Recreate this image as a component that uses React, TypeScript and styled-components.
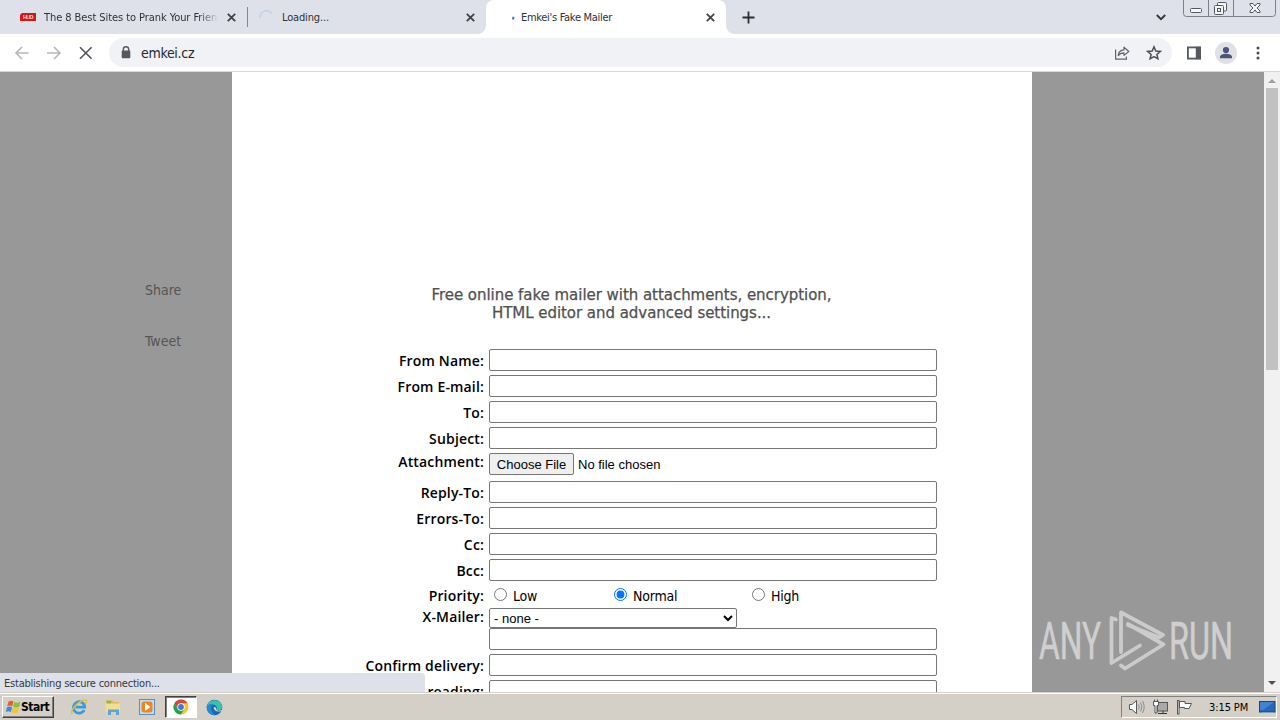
import styled, { createGlobalStyle } from 'styled-components';

const textRows = ['From Name:', 'From E-mail:', 'To:', 'Subject:'];
const replyRows = ['Reply-To:', 'Errors-To:', 'Cc:', 'Bcc:'];

export default function App() {
  return (
    <Screen>
      <GlobalStyle />
      <TabStrip>
        <Tab $width={247}>
          <HudIcon />
          <TabTitle $fade $spacing={-0.07}>
            The 8 Best Sites to Prank Your Friends
          </TabTitle>
          <CloseIcon />
        </Tab>
        <Divider />
        <Tab $width={238}>
          <SpinnerIcon />
          <TabTitle $spacing={-0.15}>Loading...</TabTitle>
          <CloseIcon />
        </Tab>
        <ActiveTab $width={240}>
          <LoadingDot />
          <TabTitle $spacing={-0.3}>Emkei's Fake Mailer</TabTitle>
          <CloseIcon />
        </ActiveTab>
        <NewTab>
          <svg width="13" height="13" viewBox="0 0 13 13" stroke="#2b2d31" strokeWidth="1.8">
            <path d="M6.5 0.5V12.5M0.5 6.5H12.5" />
          </svg>
        </NewTab>
        <TabSearch>
          <svg width="10" height="7" viewBox="0 0 10 7" fill="none" stroke="#333539" strokeWidth="1.8">
            <path d="M0.8 1L5 5.2L9.2 1" />
          </svg>
        </TabSearch>
        <WindowButtons />
      </TabStrip>

      <Toolbar>
        <NavButtons />
        <AddressBar>
          <svg width="10" height="13" viewBox="0 0 10 13">
            <path d="M2.3 5V3.4a2.7 2.7 0 0 1 5.4 0V5" fill="none" stroke="#55585d" strokeWidth="1.4" />
            <rect x="0.7" y="4.6" width="8.6" height="7.6" rx="1" fill="#55585d" />
          </svg>
          <Url>emkei.cz</Url>
          <ShareIcon />
          <StarIcon />
        </AddressBar>
        <SidePanelIcon />
        <Avatar>
          <svg width="14" height="14" viewBox="0 0 14 14" fill="#4b5675">
            <circle cx="7" cy="4" r="3.1" />
            <path d="M1 12.2V11c0-2.1 3.4-3.2 6-3.2s6 1.1 6 3.2v1.2z" />
          </svg>
        </Avatar>
        <svg width="4" height="14" viewBox="0 0 4 14" fill="#4a4c50">
          <circle cx="2" cy="2" r="1.5" />
          <circle cx="2" cy="7" r="1.5" />
          <circle cx="2" cy="12" r="1.5" />
        </svg>
      </Toolbar>

      <Viewport>
        <SideColumn>
          <span>Share</span>
          <span>Tweet</span>
        </SideColumn>
        <Page>
          <Tagline>
            Free online fake mailer with attachments, encryption,
            <br />
            HTML editor and advanced settings...
          </Tagline>
          <Form>
            {textRows.map((label) => (
              <Row key={label} $height={26}>
                <Label>{label}</Label>
                <TextInput />
              </Row>
            ))}
            <Row $height={28}>
              <Label $lift={7}>Attachment:</Label>
              <FileField>
                <FileButton type="button">Choose File</FileButton>
                <span>No file chosen</span>
              </FileField>
            </Row>
            {replyRows.map((label) => (
              <Row key={label} $height={26}>
                <Label>{label}</Label>
                <TextInput />
              </Row>
            ))}
            <Row $height={23}>
              <Label>Priority:</Label>
              <PriorityGroup>
                <Choice>
                  <input type="radio" name="priority" />
                  <span>Low</span>
                </Choice>
                <Choice>
                  <input type="radio" name="priority" defaultChecked />
                  <span>Normal</span>
                </Choice>
                <Choice>
                  <input type="radio" name="priority" />
                  <span>High</span>
                </Choice>
              </PriorityGroup>
            </Row>
            <Row $height={22}>
              <Label $lift={1}>X-Mailer:</Label>
              <MailerSelect>
                <option>- none -</option>
              </MailerSelect>
            </Row>
            <Row $height={24}>
              <Label />
              <TextInput $tight />
            </Row>
            <Row $height={26}>
              <Label>Confirm delivery:</Label>
              <TextInput />
            </Row>
            <Row $height={26}>
              <Label>Confirm reading:</Label>
              <TextInput />
            </Row>
          </Form>
        </Page>
        <Scrollbar>
          <Arrow $up />
          <Thumb />
          <Arrow />
        </Scrollbar>
        <StatusBubble>Establishing secure connection...</StatusBubble>
        <Watermark />
      </Viewport>

      <Taskbar>
        <StartButton type="button">
          <WindowsFlag />
          <span>Start</span>
        </StartButton>
        <QuickLaunch>
          <ExplorerIcon />
          <FolderIcon />
          <MediaIcon />
          <PressedTask>
            <ChromeIcon />
          </PressedTask>
          <EdgeIcon />
        </QuickLaunch>
        <Tray>
          <SpeakerIcon />
          <NetworkIcon />
          <FlagIcon />
          <Clock>3:15 PM</Clock>
          <DesktopIcon />
        </Tray>
      </Taskbar>
    </Screen>
  );
}

function CloseIcon() {
  return (
    <svg width="9" height="9" viewBox="0 0 9 9" stroke="#3f4247" strokeWidth="1.8">
      <path d="M0.8 0.8L8.2 8.2M8.2 0.8L0.8 8.2" />
    </svg>
  );
}

function HudIcon() {
  return (
    <svg width="16" height="16" viewBox="0 0 16 16">
      <path d="M2 4h14v8H0V6z" fill="#d3151c" />
      <text x="3" y="10" fontSize="5.500" fontWeight="700" fill="#ffd9d9" fontFamily="Liberation Sans, sans-serif" textLength="10.500">
        HUD
      </text>
    </svg>
  );
}

function SpinnerIcon() {
  return (
    <svg width="16" height="16" viewBox="0 0 16 16" fill="none" stroke="#bfd3ea" strokeWidth="1.600">
      <path d="M2.200 9A6.300 6.300 0 0 1 13.800 4.800" />
    </svg>
  );
}

function LoadingDot() {
  return (
    <svg width="16" height="16" viewBox="0 0 16 16" fill="none" stroke="#2f78cf" strokeWidth="2">
      <path d="M13.900 10.400L14.600 7.800" />
    </svg>
  );
}

function WindowButtons() {
  return (
    <svg width="93" height="17" viewBox="0 0 93 17" fill="none" stroke="#7b7f88">
      <path d="M0.5 0V13.500a3 3 0 0 0 3 3H89.500a3 3 0 0 0 3-3V0M25.500 0V16M50.500 0V16" />
      <g stroke="#55585f" fill="#f5f6f8">
        <rect x="7.500" y="8.500" width="11" height="4" rx="1" />
        <rect x="34.500" y="2.500" width="9" height="8.500" rx="1" />
        <rect x="31.500" y="5.500" width="9" height="9" rx="1" />
        <rect x="34.500" y="8.500" width="3" height="3" />
        <path d="M67 3.500h3l2 2.600 2-2.600h3v1.500l-3 3 3 3v1.500h-3l-2-2.600-2 2.600h-3V11l3-3-3-3z" />
      </g>
    </svg>
  );
}

function NavButtons() {
  return (
    <svg width="80" height="16" viewBox="0 0 80 16" fill="none" strokeWidth="1.600">
      <path d="M14.500 8H2M8 2L2 8L8 14" stroke="#b5b7ba" />
      <path d="M33 8H46M40 2L46 8L40 14" stroke="#b5b7ba" />
      <path d="M66 2.200L77.600 13.800M77.600 2.200L66 13.800" stroke="#505358" />
    </svg>
  );
}

function ShareIcon() {
  return (
    <svg width="16" height="16" viewBox="0 0 16 16" fill="none" stroke="#5f6368" strokeWidth="1.200" strokeLinejoin="round">
      <path d="M1.600 4.500V14.200H12.400V11.500" />
      <path d="M4.200 10.600C4.500 7.200 6.600 5.100 10 4.800V2.200L14.800 6.500L10 10.400V7.800C7.400 7.800 5.500 8.700 4.200 10.600z" />
    </svg>
  );
}

function StarIcon() {
  return (
    <svg width="16" height="16" viewBox="0 0 16 16" fill="none" stroke="#4c4f54" strokeWidth="1.500">
      <path d="M8 1.800L9.800 6L14.300 6.400L10.900 9.400L11.900 13.800L8 11.500L4.100 13.800L5.100 9.400L1.700 6.400L6.200 6z" />
    </svg>
  );
}

function SidePanelIcon() {
  return (
    <svg width="14" height="14" viewBox="0 0 14 14">
      <rect x="0.900" y="1.400" width="12.200" height="11.200" fill="#fff" stroke="#55585d" strokeWidth="1.800" />
      <rect x="8.800" y="0.800" width="5" height="12.400" fill="#55585d" />
    </svg>
  );
}

function Watermark() {
  return (
    <WatermarkSvg width="200" height="64" viewBox="0 0 200 64">
      <g fill="#cfcfcf" stroke="#cfcfcf" strokeWidth="0.600" fontFamily="Roboto, sans-serif" fontSize="51">
        <text x="3" y="50" textLength="62" lengthAdjust="spacingAndGlyphs">
          ANY
        </text>
        <text x="133" y="50" textLength="64" lengthAdjust="spacingAndGlyphs">
          RUN
        </text>
      </g>
      <g fill="none" stroke="#cbcbcb" strokeWidth="3.800" strokeLinejoin="round" strokeLinecap="round">
        <path d="M80 10.500L75.500 9V54L104 36.500" />
        <path d="M85 43V3.500L127 26L123 28.500L92 16" />
        <path d="M85 56.500L89 59.500L127.500 35.500L92 15" />
      </g>
    </WatermarkSvg>
  );
}

function WindowsFlag() {
  return (
    <svg width="17" height="16" viewBox="0 0 17 16">
      <path d="M3.500 2.500C5.500 1.300 7 1.500 8.500 2.500L7.300 7.300C5.800 6.300 4.200 6.300 2.300 7.200z" fill="#e4602d" />
      <path d="M9.300 2.900C11.200 4 13 4 15.500 2.800L14.200 7.700C12.200 8.800 10 8.700 8.100 7.600z" fill="#8abf3f" />
      <path d="M2 8.200C4 7.200 5.600 7.400 7.100 8.300L5.900 13.100C4.300 12.100 2.700 12 0.800 12.900z" fill="#3c8bd9" />
      <path d="M7.900 8.700C9.800 9.700 11.800 9.800 14 8.700L12.700 13.400C10.500 14.600 8.500 14.500 6.700 13.500z" fill="#f3c433" />
    </svg>
  );
}

function ExplorerIcon() {
  return (
    <svg width="18" height="18" viewBox="0 0 18 18" fill="none">
      <path d="M14.200 12A5.700 5.700 0 1 1 14.800 9.200H5.500" stroke="#389bd8" strokeWidth="2.700" />
      <path d="M2.400 15.800C-0.500 13.500 6 5.500 12 2.700C16.800 0.600 17.200 3 15.500 5.800" stroke="#e7b93d" strokeWidth="1.500" />
    </svg>
  );
}

function FolderIcon() {
  return (
    <svg width="18" height="18" viewBox="0 0 18 18">
      <path d="M2 2h6l1 2h6v10H2z" fill="#dcb95a" />
      <path d="M3 3h4v4H3z" fill="#83b768" />
      <path d="M1.500 5.500h14.500V14h-14.500z" fill="#f2dd94" />
      <path d="M4 17v-5.500h11V17h-3v-3h-5v3z" fill="#5fa5d4" />
    </svg>
  );
}

function MediaIcon() {
  return (
    <svg width="18" height="18" viewBox="0 0 18 18">
      <rect x="1.500" y="1.500" width="15" height="15" fill="#c5ddf0" stroke="#568fc2" />
      <rect x="3.500" y="3.500" width="11" height="11" rx="2.500" fill="#ee8422" />
      <path d="M7 5L12.500 9L7 13z" fill="#fff" />
    </svg>
  );
}

function ChromeIcon() {
  return (
    <svg width="16" height="16" viewBox="0 0 16 16">
      <circle cx="8" cy="8" r="7.500" fill="#f6c62d" />
      <path d="M1.500 4.250A7.500 7.500 0 0 1 14.500 4.250H8L4.750 9.900z" fill="#db4437" />
      <path d="M1.500 4.250A7.500 7.500 0 0 0 8 15.500L11.200 9.900L8 11.750L4.750 9.900z" fill="#26a054" />
      <circle cx="8" cy="8" r="3.700" fill="#fff" />
      <circle cx="8" cy="8" r="2.900" fill="#3a78e7" />
    </svg>
  );
}

function EdgeIcon() {
  return (
    <svg width="17" height="17" viewBox="0 0 17 17">
      <circle cx="8.500" cy="8.500" r="7.800" fill="#1767b5" />
      <path d="M0.800 7.500C2 -1 15.500 -1 16.200 7.500C16.300 10.500 13.500 11.500 10.500 11C12 8.500 10 5.500 6.500 5.500C4 5.500 2 6 0.800 7.500z" fill="#39c1a9" />
      <path d="M0.700 8.500C1 5.800 4 4.300 7 5.400C4 7.500 4.500 13 9.500 16.200C4 16.600 0.500 12.500 0.700 8.500z" fill="#2189d6" />
      <path d="M7.500 8.500C8.500 7.200 10.800 8 10.300 10.500C10.700 12 14 12 16.500 10.500C15 13.600 8 13.500 7.500 8.500z" fill="#d4d8d8" />
    </svg>
  );
}

function SpeakerIcon() {
  return (
    <svg width="17" height="16" viewBox="0 0 17 16" fill="none" stroke="#55575a">
      <path d="M1.500 5.500h2.500L8.500 1.500v13L4 10.500H1.500z" fill="#fff" />
      <path d="M10.500 5.500q1.600 2.500 0 5M12.500 3.500q3 4.500 0 9M14.500 2q3.400 6 0 12" stroke="#8b8b8b" />
    </svg>
  );
}

function NetworkIcon() {
  return (
    <svg width="17" height="16" viewBox="0 0 17 16" stroke="#55575a">
      <rect x="5.500" y="3.500" width="10" height="8.500" fill="#a9aba9" />
      <path d="M6 14.500h9M11 12v2.500" stroke="#333" />
      <path d="M1.500 2.500h5v4h-1.500v7.500h-2V6.500H1.500zM2.500 0.500v2M5.500 0.500v2" fill="#fff" />
    </svg>
  );
}

function FlagIcon() {
  return (
    <svg width="17" height="16" viewBox="0 0 17 16" fill="#fff" stroke="#55575a">
      <path d="M3.500 2.500H9V4.500H15.500L13 9.500H8.500V8.500H3.500z" />
      <rect x="1.500" y="1.500" width="1.500" height="13.500" />
    </svg>
  );
}

function DesktopIcon() {
  return (
    <svg width="17" height="15" viewBox="0 0 17 15">
      <rect x="0.500" y="1.500" width="15.500" height="10.500" fill="#2767b9" stroke="#174481" />
      <path d="M1 2h14L4 10H1z" fill="#4282d2" />
      <path d="M3 13.500h11" stroke="#bfd4ea" strokeWidth="1.500" />
    </svg>
  );
}

const GlobalStyle = createGlobalStyle`
  * {
    box-sizing: border-box;
  }
  body {
    margin: 0;
    overflow: hidden;
  }
  svg {
    display: block;
    flex: none;
  }
`;

const Screen = styled.div`
  display: flex;
  flex-direction: column;
  width: 1280px;
  height: 720px;
  font-family: 'DejaVu Sans Condensed', 'DejaVu Sans', sans-serif;
  color: #000;
  overflow: hidden;
`;

const TabStrip = styled.div`
  display: flex;
  height: 34px;
  background: #dee1e9;
`;

const Tab = styled.div<{ $width: number }>`
  display: flex;
  align-items: center;
  width: ${(p) => p.$width}px;
  padding: 0 11px 0 20px;
  gap: 8px;
  font-size: 11px;

  &:nth-child(3) {
    padding-left: 10px;
  }
`;

const ActiveTab = styled(Tab)`
  position: relative;
  background: #fff;
  border-radius: 8px 8px 0 0;
  padding-left: 13px;
  gap: 6px;

  &::before,
  &::after {
    content: '';
    position: absolute;
    bottom: 0;
    width: 8px;
    height: 8px;
  }
  &::before {
    left: -8px;
    background: radial-gradient(circle at 0 0, transparent 7.5px, #fff 8px);
  }
  &::after {
    right: -8px;
    background: radial-gradient(circle at 100% 0, transparent 7.5px, #fff 8px);
  }
`;

const TabTitle = styled.span<{ $fade?: boolean; $spacing: number }>`
  flex: 1;
  min-width: 0;
  overflow: hidden;
  white-space: nowrap;
  color: #2e3135;
  letter-spacing: ${(p) => p.$spacing}px;
  ${(p) => p.$fade && 'mask-image: linear-gradient(90deg, #000 155px, transparent 175px);'}
`;

const Divider = styled.div`
  width: 1px;
  height: 20px;
  margin-top: 7px;
  background: #83868c;
`;

const NewTab = styled.div`
  padding: 11px 16px;
`;

const TabSearch = styled.div`
  margin-left: auto;
  padding: 14px 17px 0 0;

  & + svg {
    margin-right: 4px;
  }
`;

const Toolbar = styled.div`
  display: flex;
  align-items: center;
  height: 38px;
  padding: 0 20px 0 14px;
  background: #fff;
  border-bottom: 1px solid #d5d7da;

  > svg:last-child {
    margin-left: 19px;
  }
`;

const AddressBar = styled.div`
  display: flex;
  align-items: center;
  width: 1063px;
  height: 29px;
  margin: 0 15px 0 15px;
  padding: 0 10px 0 12px;
  border-radius: 15px;
  background: #f0f2f5;
  gap: 16px;
`;

const Url = styled.span`
  flex: 1;
  margin-left: -6px;
  color: #25272b;
  font-size: 14px;
  letter-spacing: -0.3px;
`;

const Avatar = styled.div`
  display: grid;
  place-items: center;
  width: 22px;
  height: 22px;
  margin-left: 14px;
  border-radius: 50%;
  background: #dfe1e6;
`;

const Viewport = styled.main`
  position: relative;
  display: flex;
  height: 620px;
  background: #989898;
  overflow: hidden;
`;

const SideColumn = styled.div`
  display: flex;
  flex-direction: column;
  width: 232px;
  padding: 209px 0 0 145px;
  gap: 33px;
  font-size: 14px;
  line-height: 18px;
  color: #555;
`;

const Page = styled.div`
  width: 800px;
  background: #fff;
`;

const Tagline = styled.p`
  margin: 214px 0 0;
  padding-right: 1px;
  font-family: 'DejaVu Sans', sans-serif;
  font-size: 15px;
  line-height: 18px;
  letter-spacing: -0.04px;
  text-align: center;
  color: #505050;
  -webkit-text-stroke: 0.25px #505050;
`;

const Form = styled.form`
  margin-top: 25px;
`;

const Row = styled.div<{ $height: number }>`
  display: grid;
  grid-template-columns: 252px 448px;
  column-gap: 5px;
  align-items: center;
  height: ${(p) => p.$height}px;
`;

const Label = styled.label<{ $lift?: number }>`
  padding: ${(p) => (p.$lift ? `0 0 ${p.$lift}px` : '2px 0 0')};
  font-family: 'Open Sans', 'Noto Sans', sans-serif;
  font-size: 14px;
  font-weight: 600;
  line-height: 18px;
  letter-spacing: 0.16px;
  text-align: right;
  white-space: nowrap;
`;

const TextInput = styled.input<{ $tight?: boolean }>`
  width: 448px;
  height: 22px;
  margin: 0;
  border: 1px solid #767676;
  border-radius: 2px;
  background: #fff;
  ${(p) => p.$tight && 'align-self: start;'}
`;

const FileField = styled.div`
  display: flex;
  align-items: center;
  gap: 4px;
  padding-bottom: 2px;
  font-family: 'Liberation Sans', Arial, sans-serif;
  font-size: 13px;
`;

const FileButton = styled.button`
  width: 85px;
  height: 22px;
  padding: 0;
  border: 1px solid #767676;
  border-radius: 2px;
  background: #efefef;
  font: inherit;
`;

const PriorityGroup = styled.div`
  display: grid;
  grid-template-columns: 120px 138px auto;
`;

const Choice = styled.label`
  display: flex;
  align-items: center;
  height: 19px;
  font-size: 14px;
  letter-spacing: -0.2px;
  line-height: 17px;

  input {
    width: 13px;
    height: 13px;
    margin: 0 6px 0 5px;
  }
  span {
    padding-top: 3px;
  }
`;

const MailerSelect = styled.select`
  align-self: end;
  width: 248px;
  height: 20px;
  padding: 0;
  border: 1px solid #767676;
  border-radius: 2px;
  background: #fff;
  font-family: 'Liberation Sans', Arial, sans-serif;
  font-size: 13px;
`;

const Scrollbar = styled.div`
  display: flex;
  flex-direction: column;
  align-items: center;
  width: 16px;
  margin-left: auto;
  background: #f1f1f1;
`;

const Arrow = styled.span<{ $up?: boolean }>`
  width: 8px;
  height: 4px;
  margin: ${(p) => (p.$up ? '7px 0 5px' : 'auto 0 7px')};
  background: ${(p) => (p.$up ? '#a0a0a0' : '#505050')};
  clip-path: ${(p) => (p.$up ? 'polygon(50% 0, 100% 100%, 0 100%)' : 'polygon(0 0, 100% 0, 50% 100%)')};
`;

const Thumb = styled.div`
  width: 12px;
  height: 282px;
  background: #c1c1c1;
`;

const StatusBubble = styled.div`
  position: absolute;
  left: 0;
  bottom: 0;
  width: 425px;
  height: 19px;
  padding-left: 4px;
  border-radius: 0 4px 0 0;
  background: #dee1e9;
  font-size: 11px;
  line-height: 21px;
  letter-spacing: -0.22px;
  color: #35383c;
`;

const WatermarkSvg = styled.svg`
  position: absolute;
  right: 44px;
  bottom: 19px;
`;

const Taskbar = styled.footer`
  display: flex;
  align-items: center;
  height: 28px;
  padding: 3px 3px 1px 2px;
  background: #d4d0c8;
  box-shadow: inset 0 1px #d4d0c8, inset 0 2px #fff;
`;

const StartButton = styled.button`
  display: flex;
  align-items: center;
  width: 52px;
  height: 22px;
  padding: 0 0 0 2px;
  border: 1px solid;
  border-color: #fff #404040 #404040 #fff;
  background: #d4d0c8;
  box-shadow: inset -1px -1px #808080;
  font: bold 12px 'DejaVu Sans Condensed', sans-serif;
  letter-spacing: -0.5px;
  color: #000;

  span {
    margin-left: -1px;
  }
`;

const QuickLaunch = styled.div`
  display: flex;
  align-items: center;
  margin-left: 16px;
  gap: 16px;

  > svg:last-child {
    margin-left: -7px;
  }
`;

const PressedTask = styled.div`
  display: grid;
  place-items: center;
  width: 32px;
  height: 22px;
  margin-left: -7px;
  border: 1px solid;
  border-color: #404040 #fff #fff #404040;
  background: #fff;
  box-shadow: inset 1px 1px #808080;
`;

const Tray = styled.div`
  display: flex;
  align-items: center;
  width: 156px;
  height: 22px;
  margin-left: auto;
  padding-left: 6px;
  gap: 7px;
  border: 1px solid;
  border-color: #808080 #fff #fff #808080;
`;

const Clock = styled.span`
  width: 45px;
  margin-left: 9px;
  font-size: 11px;
  letter-spacing: -0.1px;
  white-space: nowrap;
`;
